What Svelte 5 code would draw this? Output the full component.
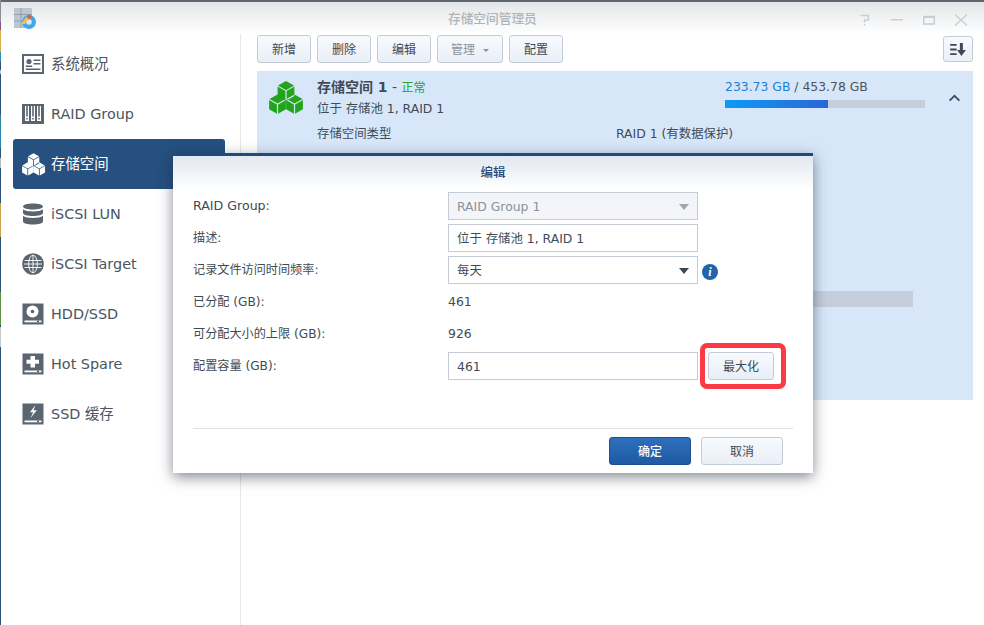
<script>
	const navItems = [
		{ label: '系统概况', icon: 'overview' },
		{ label: 'RAID Group', icon: 'raid' },
		{ label: '存储空间', icon: 'cubes', active: true },
		{ label: 'iSCSI LUN', icon: 'db' },
		{ label: 'iSCSI Target', icon: 'globe' },
		{ label: 'HDD/SSD', icon: 'hdd' },
		{ label: 'Hot Spare', icon: 'spare' },
		{ label: 'SSD 缓存', icon: 'ssd' }
	];

	const toolbar = [
		{ label: '新增' },
		{ label: '删除' },
		{ label: '编辑' },
		{ label: '管理', menu: true },
		{ label: '配置' }
	];

	// isometric cube faces, three cubes stacked
	function cubePath(cx, ty) {
		const top = `M${cx} ${ty}L${cx + 8} ${ty + 4.6}L${cx} ${ty + 9.2}L${cx - 8} ${ty + 4.6}Z`;
		const left = `M${cx - 8.4} ${ty + 5.6}L${cx - 0.6} ${ty + 10.1}L${cx - 0.6} ${ty + 19.4}L${cx - 8.4} ${ty + 14.9}Z`;
		const right = `M${cx + 8.4} ${ty + 5.6}L${cx + 0.6} ${ty + 10.1}L${cx + 0.6} ${ty + 19.4}L${cx + 8.4} ${ty + 14.9}Z`;
		return top + left + right;
	}
	const cubes = cubePath(17, 0) + cubePath(8.5, 13.4) + cubePath(25.5, 13.4);
</script>

{#snippet navIcon(name)}
	<svg class="nav-icon" viewBox="0 0 22 22" aria-hidden="true">
		{#if name === 'overview'}
			<path fill="#5b6570" fill-rule="evenodd" d="M0 1h22v20H0zM2 3v16h18V3z" />
			<circle cx="7" cy="8.5" r="2.6" fill="#5b6570" />
			<path fill="#5b6570" d="M3.8 12.4h6.4v1.6H3.8zM11.5 6.5h7v1.5h-7zM11.5 10h7v1.5h-7zM3.8 15.5h14.7V17H3.8z" />
		{:else if name === 'raid'}
			<path fill="#5b6570" d="M0 1h22v20H0z" />
			<path fill="#fff" d="M3 3h4v15H3zM9 3h4v15H9zM15 3h4v15h-4z" />
			<path fill="#5b6570" d="M4.2 3h1.6v10.5H4.2zM10.2 3h1.6v10.5h-1.6zM16.2 3h1.6v10.5h-1.6z" />
			<path fill="#5b6570" d="M4.2 15h1.6v1.6H4.2zM10.2 15h1.6v1.6h-1.6zM16.2 15h1.6v1.6h-1.6z" />
		{:else if name === 'cubes'}
			<path fill="#fff" transform="scale(.68) translate(0 .2)" d={cubes} />
		{:else if name === 'db'}
			<path fill="#5b6570" d="M1 3.5C1 1.8 5.5.5 11 .5s10 1.3 10 3-4.500 3-10 3-10-1.300-10-3zM1 6.300c1.800 1.500 5.700 2.200 10 2.200s8.200-.7 10-2.200V10c0 1.700-4.500 3-10 3S1 11.700 1 10zM1 12.800C2.800 14.300 6.700 15 11 15s8.200-.7 10-2.200v5.700c0 1.700-4.500 3-10 3s-10-1.300-10-3z" />
		{:else if name === 'globe'}
			<circle cx="11" cy="11" r="10.800" fill="#5b6570" />
			<g fill="none" stroke="#fff" stroke-width=".9">
				<ellipse cx="11" cy="11" rx="4.400" ry="8.800" />
				<path d="M11 2v18M2.500 7.500h17M2 11h18M2.500 14.500h17" />
			</g>
		{:else if name === 'hdd'}
			<path fill="#5b6570" d="M.5.500h21v21H.5z" />
			<circle cx="10.500" cy="8.500" r="6" fill="#fff" />
			<circle cx="10.500" cy="8.500" r="1.800" fill="#5b6570" />
			<path fill="#fff" d="M2.500 17.500h17v1.800h-17z" />
			<path fill="#5b6570" d="M15 17.500h2v1.800h-2z" />
		{:else if name === 'spare'}
			<path fill="#5b6570" d="M.5.500h21v21H.5z" />
			<path fill="#fff" d="M8.500 3h4.500v3.800h4v4h-4v3.700H8.500v-3.700h-4v-4h4z" />
			<path fill="#fff" d="M2.500 17.500h17v1.800h-17z" />
			<path fill="#5b6570" d="M15 17.500h2v1.800h-2z" />
		{:else if name === 'ssd'}
			<path fill="#5b6570" d="M.5.500h21v21H.5z" />
			<path fill="#fff" d="M13.500 2l-5.500 7.300h3.200L8.500 15l6.300-7.700h-3.300z" />
			<path fill="#fff" d="M2.500 17.500h17v1.800h-17z" />
			<path fill="#5b6570" d="M15 17.500h2v1.800h-2z" />
		{/if}
	</svg>
{/snippet}

<div class="desktop">
	<div class="strip"></div>
	<div class="window">
		<header class="titlebar">
			<svg class="app-icon" viewBox="0 0 24 24" aria-hidden="true">
				<path fill="#bcc6d2" d="M0 2h18v20H0z" />
				<path fill="none" stroke="#8b98a8" stroke-width=".8" d="M0 8.500h18M0 15h18M7 2v20" />
				<circle cx="15" cy="16" r="7" fill="#47a5ea" />
				<circle cx="15" cy="16" r="2.800" fill="#dfe7ef" />
				<path fill="#f2c14e" d="M7 18l5.500-7.500 2 2.500-3.500 5z" />
				<path fill="#d9624f" d="M12.500 10.500l3-2.500 3 3.500-3.500 1.800z" />
			</svg>
			<span class="app-title">存储空间管理员</span>
			<div class="win-controls">
				<svg viewBox="0 0 14 14" aria-hidden="true"><path fill="none" stroke="#c9cdd1" stroke-width="1.400" d="M2.500 2.500h8v4.500h-4v2.500M6.500 11v1.500" /></svg>
				<svg viewBox="0 0 14 14" aria-hidden="true"><path fill="#c9cdd1" d="M1 6h12v1.400H1z" /></svg>
				<svg viewBox="0 0 14 14" aria-hidden="true"><path fill="none" stroke="#c9cdd1" stroke-width="1.400" d="M1.700 3.500h10.600v7.500H1.700z" /><path fill="#c9cdd1" d="M1 3h12v2H1z" /></svg>
				<svg viewBox="0 0 14 14" aria-hidden="true"><path fill="none" stroke="#c9cdd1" stroke-width="1.300" d="M1 1.500l12 11M13 1.500l-12 11" /></svg>
			</div>
		</header>

		<div class="body">
			<nav class="sidebar">
				{#each navItems as item}
					<div class="nav-item" class:active={item.active}>
						{@render navIcon(item.icon)}
						<span>{item.label}</span>
					</div>
				{/each}
			</nav>

			<main class="content">
				<div class="toolbar">
					{#each toolbar as btn}
						<button class="btn tool" class:menu={btn.menu}>
							{btn.label}
							{#if btn.menu}<i class="caret"></i>{/if}
						</button>
					{/each}
					<button class="btn sort" aria-label="排序">
						<svg viewBox="0 0 18 14" aria-hidden="true">
							<path fill="#3f4852" d="M0 1h7v2H0zM0 6h7v2H0zM0 11h7v2H0zM10.500 0h3.200v7.500H17L12.100 14 7.500 7.500h3z" />
						</svg>
					</button>
				</div>

				<section class="volume">
					<svg class="volume-icon" viewBox="0 0 34 33" aria-hidden="true">
						<path fill="#22a51b" d={cubes} />
					</svg>
					<div class="volume-info">
						<div class="volume-title"><b>存储空间 1</b> - <em>正常</em></div>
						<div class="volume-sub">位于 存储池 1, RAID 1</div>
						<div class="volume-type"><span class="type-name">存储空间类型</span><span>RAID 1 (有数据保护)</span></div>
						<div class="hidden-bar"></div>
					</div>
					<div class="usage">
						<div class="usage-text"><span class="used">233.73 GB</span> / 453.78 GB</div>
						<div class="usage-track"><div class="usage-fill" style="width: 51.500%"></div></div>
					</div>
					<svg class="chevron" viewBox="0 0 14 9" aria-hidden="true">
						<path fill="none" stroke="#3a4d63" stroke-width="2" d="M1.500 7.500L7 2l5.500 5.500" />
					</svg>
				</section>
			</main>
		</div>
	</div>

	<div class="dialog">
		<div class="dialog-head">编辑</div>
		<div class="form">
			<label class="latin">RAID Group:</label>
			<div class="field disabled">RAID Group 1<i class="arrow"></i></div>
			<span></span>

			<label>描述:</label>
			<div class="field">位于 存储池 1, RAID 1</div>
			<span></span>

			<label>记录文件访问时间频率:</label>
			<div class="field">每天<i class="arrow"></i></div>
			<span class="info">i</span>

			<label>已分配 (GB):</label>
			<div class="value">461</div>
			<span></span>

			<label>可分配大小的上限 (GB):</label>
			<div class="value">926</div>
			<span></span>

			<label>配置容量 (GB):</label>
			<div class="field">461</div>
			<div class="max-wrap"><button class="btn max">最大化</button></div>
		</div>
		<div class="dialog-foot">
			<button class="btn primary">确定</button>
			<button class="btn cancel">取消</button>
		</div>
	</div>
</div>

<style>
	:global(body) {
		margin: 0;
		background: #fff;
		font-family: "DejaVu Sans", "Noto Sans CJK SC", sans-serif;
	}

	.desktop {
		position: relative;
		display: flex;
		width: 984px;
		height: 625px;
		overflow: hidden;
	}

	.strip {
		width: 1px;
		flex: none;
		background: linear-gradient(to bottom,
			#8a8f96 0, #8a8f96 22px, #8a4f90 22px, #8a4f90 30px, #d3b04a 30px, #d3b04a 52px,
			#2f8fa8 52px, #2f8fa8 62px, #2f5378 62px, #2f5378 70px, #b9c0c8 70px, #b9c0c8 74px,
			#2f5378 74px, #2f5378 115px, #2a86a8 115px, #2a86a8 148px, #2f5378 148px, #2f5378 158px,
			#b5bac0 158px, #b5bac0 168px, #2f5378 168px, #2f5378 203px, #c8a24e 203px, #c8a24e 237px,
			#2f5378 237px, #2f5378 292px, #5f9240 292px, #5f9240 325px, #2f5378 325px, #2f5378 327px,
			#c3c8cd 327px, #c3c8cd 347px, #2f5378 347px);
	}

	.window {
		flex: 1;
		display: flex;
		flex-direction: column;
		border-top: 2px solid #5f6670;
		min-width: 0;
	}

	.titlebar {
		position: relative;
		height: 32px;
		flex: none;
		background: linear-gradient(to bottom, #e3e6e9, #fff);
		display: flex;
		align-items: center;
	}

	.app-icon {
		width: 24px;
		height: 24px;
		margin-left: 13px;
	}

	.app-title {
		position: absolute;
		left: 447px;
		top: 9px;
		font-size: 12.7px;
		line-height: 16px;
		color: #b0b4b9;
		font-weight: 500;
	}

	.win-controls {
		margin-left: auto;
		margin-right: 16px;
		display: flex;
		gap: 18px;
		margin-top: 3px;
	}

	.win-controls svg {
		width: 14px;
		height: 14px;
	}

	.body {
		flex: 1;
		display: flex;
		min-height: 0;
	}

	.sidebar {
		width: 240px;
		flex: none;
		box-sizing: border-box;
		padding: 5px 15px 0 12px;
		border-right: 1px solid #e4e6e9;
	}

	.nav-item {
		height: 50px;
		display: flex;
		align-items: center;
		gap: 7px;
		padding-left: 9px;
		border-radius: 3px;
		font-size: 14.4px;
		line-height: 18px;
		color: #4a5561;
	}

	.nav-item.active {
		background: #25507f;
		color: #fff;
	}

	.nav-icon {
		width: 22px;
		height: 22px;
		flex: none;
		overflow: visible;
	}

	.content {
		flex: 1;
		min-width: 0;
		padding: 1px 11px 0 16px;
	}

	.toolbar {
		display: flex;
		gap: 6px;
		height: 28px;
	}

	.btn {
		box-sizing: border-box;
		border: 1px solid #c3ccd6;
		border-radius: 3px;
		background: linear-gradient(to bottom, #f8fafd, #e9eff7);
		color: #3f4852;
		font: 12px "DejaVu Sans", "Noto Sans CJK SC", sans-serif;
		padding: 0 0 2px;
	}

	.tool {
		width: 54px;
		height: 28px;
	}

	.tool.menu {
		width: 66px;
		color: #8a929b;
	}

	.caret {
		display: inline-block;
		width: 0;
		height: 0;
		margin-left: 4px;
		vertical-align: 2px;
		border: 3px solid transparent;
		border-top-color: #8a929b;
		border-bottom-width: 0;
	}

	.sort {
		margin: 1px 0 0 auto;
		width: 30px;
		height: 26px;
		display: flex;
		align-items: center;
		justify-content: center;
		padding: 0;
	}

	.sort svg {
		width: 17px;
		height: 13px;
	}

	.volume {
		position: relative;
		margin-top: 8px;
		height: 329px;
		background: #d7e7f9;
		display: flex;
		align-items: flex-start;
	}

	.volume-icon {
		width: 34px;
		height: 33px;
		flex: none;
		margin: 10px 0 0 12px;
	}

	.volume-info {
		width: 408px;
		flex: none;
		margin-left: 14px;
		padding-top: 7px;
		font-size: 12.4px;
		color: #414b55;
	}

	.volume-title {
		line-height: 18px;
		font-size: 14px;
	}

	.volume-title b {
		font-weight: 700;
	}

	.volume-title em {
		font-style: normal;
		font-size: 12px;
		color: #2ba12b;
	}

	.volume-sub {
		margin-top: 3px;
		line-height: 18px;
	}

	.volume-type {
		display: flex;
		margin-top: 7px;
		line-height: 18px;
		white-space: nowrap;
	}

	.type-name {
		width: 299px;
		flex: none;
	}

	.hidden-bar {
		width: 596px;
		height: 16px;
		margin-top: 148px;
		background: #c5cfdc;
	}

	.usage {
		width: 200px;
		flex: none;
		padding-top: 7px;
	}

	.usage-text {
		font-size: 12.4px;
		line-height: 18px;
		color: #4a5561;
		white-space: nowrap;
	}

	.used {
		color: #1b80d6;
	}

	.usage-track {
		height: 8px;
		margin-top: 4px;
		background: #c5cfdc;
	}

	.usage-fill {
		height: 100%;
		background: linear-gradient(to right, #0e9bf5, #2c66d6);
	}

	.chevron {
		width: 13px;
		height: 8px;
		margin: 23px 0 0 23px;
		flex: none;
	}

	.dialog {
		position: absolute;
		left: 173px;
		top: 153px;
		width: 640px;
		height: 320px;
		box-sizing: border-box;
		border-top: 3px solid #25487a;
		background: #fff;
		box-shadow: 0 4px 13px rgba(30, 40, 55, 0.55);
		font-size: 12.4px;
		color: #414b55;
	}

	.dialog-head {
		height: 34px;
		background: linear-gradient(to bottom, #e2e8f0, #fff);
		color: #25487a;
		font-size: 12.5px;
		font-weight: 500;
		text-align: center;
		line-height: 33px;
		box-sizing: border-box;
	}

	.form {
		display: grid;
		grid-template-columns: 255px 250px auto;
		grid-auto-rows: 32px;
		align-items: center;
		padding: 0 20px;
	}

	.form label {
		white-space: nowrap;
		font-size: 12.15px;
		line-height: 17px;
	}

	.form label.latin {
		font-size: 12.6px;
		line-height: 16px;
	}

	.value {
		line-height: 16px;
	}

	.field {
		position: relative;
		box-sizing: border-box;
		height: 28px;
		border: 1px solid #c5ccd5;
		line-height: 27px;
		padding-left: 8px;
	}

	.field.disabled {
		background: #f3f5f8;
		color: #8a929b;
	}

	.arrow {
		position: absolute;
		right: 8px;
		top: 11px;
		border: 5px solid transparent;
		border-top: 6px solid #3f4852;
		border-bottom-width: 0;
	}

	.field.disabled .arrow {
		border-top-color: #a0a7af;
	}

	.info {
		width: 16px;
		height: 16px;
		margin: 3px 0 0 4px;
		border-radius: 50%;
		background: #2363aa;
		color: #fff;
		font: italic 700 12px/16px "Liberation Serif", serif;
		text-align: center;
	}

	.max-wrap {
		margin-left: 2px;
		width: 86px;
		height: 46px;
		box-sizing: border-box;
		padding-left: 3px;
		border: 5px solid #fb3a45;
		border-radius: 7px;
		display: flex;
		align-items: center;
	}

	.max {
		width: 66px;
		height: 28px;
		flex: none;
	}

	.dialog-foot {
		position: absolute;
		left: 20px;
		right: 20px;
		top: 272px;
		padding-top: 8px;
		border-top: 1px solid #dfe2e6;
		display: flex;
		justify-content: flex-end;
		gap: 10px;
		padding-right: 10px;
	}

	.primary,
	.cancel {
		width: 82px;
		height: 28px;
	}

	.primary {
		background: linear-gradient(to bottom, #2f6fbd, #1f5aa3);
		border-color: #1c4f92;
		color: #fff;
		font-weight: 500;
	}
</style>
